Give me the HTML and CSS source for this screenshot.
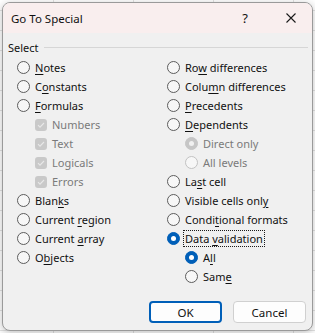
FILE: index.html
```html
<!DOCTYPE html>
<html lang="en">
<head>
    <meta charset="UTF-8">
    <title>Go To Special</title>
    <link rel="stylesheet" href="styles.css">
</head>
<body>
    <div class="dialog">
        <div class="titlebar">
            <span class="title">Go To Special</span>
            <span class="help">?</span>
            <svg class="close" width="10" height="10" viewBox="0 0 10 10">
                <path d="M0.5 0.5 L9.5 9.5 M9.5 0.5 L0.5 9.5" stroke="#1a1a1a" stroke-width="1.1"/>
            </svg>
        </div>

        <div class="content">
            <div class="group-head">
                <span>Select</span>
                <div class="rule"></div>
            </div>

            <div class="columns">
                <div class="col">
                    <label class="opt"><span class="radio"></span><span><u>N</u>otes</span></label>
                    <label class="opt"><span class="radio"></span><span>C<u>o</u>nstants</span></label>
                    <label class="opt"><span class="radio"></span><span><u>F</u>ormulas</span></label>
                    <label class="opt sub disabled"><span class="check"><svg width="12" height="12" viewBox="0 0 12 12"><path d="M3 6.2 L5 8.2 L9 4" fill="none" stroke="#e8e8e8" stroke-width="1.1"/></svg></span><span>Numbers</span></label>
                    <label class="opt sub disabled"><span class="check"><svg width="12" height="12" viewBox="0 0 12 12"><path d="M3 6.2 L5 8.2 L9 4" fill="none" stroke="#e8e8e8" stroke-width="1.1"/></svg></span><span>Text</span></label>
                    <label class="opt sub disabled"><span class="check"><svg width="12" height="12" viewBox="0 0 12 12"><path d="M3 6.2 L5 8.2 L9 4" fill="none" stroke="#e8e8e8" stroke-width="1.1"/></svg></span><span>Logicals</span></label>
                    <label class="opt sub disabled"><span class="check"><svg width="12" height="12" viewBox="0 0 12 12"><path d="M3 6.2 L5 8.2 L9 4" fill="none" stroke="#e8e8e8" stroke-width="1.1"/></svg></span><span>Errors</span></label>
                    <label class="opt"><span class="radio"></span><span>Blan<u>k</u>s</span></label>
                    <label class="opt"><span class="radio"></span><span>Current <u>r</u>egion</span></label>
                    <label class="opt"><span class="radio"></span><span>Current <u>a</u>rray</span></label>
                    <label class="opt"><span class="radio"></span><span>O<u>b</u>jects</span></label>
                </div>

                <div class="col">
                    <label class="opt"><span class="radio"></span><span>Ro<u>w</u> differences</span></label>
                    <label class="opt"><span class="radio"></span><span>Colu<u>m</u>n differences</span></label>
                    <label class="opt"><span class="radio"></span><span><u>P</u>recedents</span></label>
                    <label class="opt"><span class="radio"></span><span><u>D</u>ependents</span></label>
                    <label class="opt sub disabled"><span class="radio on"></span><span>Direct only</span></label>
                    <label class="opt sub disabled"><span class="radio"></span><span>All levels</span></label>
                    <label class="opt"><span class="radio"></span><span>La<u>s</u>t cell</span></label>
                    <label class="opt"><span class="radio"></span><span>Visible cells onl<u>y</u></span></label>
                    <label class="opt"><span class="radio"></span><span>Condi<u>t</u>ional formats</span></label>
                    <label class="opt"><span class="radio on"></span><span class="focus">Data <u>v</u>alidation</span></label>
                    <label class="opt sub"><span class="radio on"></span><span>A<u>l</u>l</span></label>
                    <label class="opt sub"><span class="radio"></span><span>Sam<u>e</u></span></label>
                </div>
            </div>

            <div class="buttons">
                <button class="btn default">OK</button>
                <button class="btn">Cancel</button>
            </div>
        </div>
    </div>
</body>
</html>
```

FILE: styles.css
```css
* {
    margin: 0;
    padding: 0;
    box-sizing: border-box;
}

body {
    font-family: 'Noto Sans', sans-serif;
    font-size: 11px;
    color: #111;
    width: 315px;
    height: 333px;
    padding: 2px 0 0 2px;
    overflow: hidden;
    background-color: #ffffff;
    background-image:
        linear-gradient(90deg, #e2e2e2 1px, transparent 1px),
        linear-gradient(#e2e2e2 1px, transparent 1px);
    background-size: 80px 100%, 100% 20px;
    background-position: 53px 0, 0 10px;
}

.dialog {
    width: 311px;
    height: 329px;
    border: 1px solid #9a9a9a;
    border-radius: 8px;
    overflow: hidden;
    background: #f0f0f0;
    box-shadow: 0 2px 8px rgba(0, 0, 0, 0.25);
}

.titlebar {
    height: 30px;
    background: #f9eeee;
    display: flex;
    align-items: center;
    padding-left: 8px;
    font-size: 11.5px;
}

.title {
    flex: 1;
}

.help {
    font-size: 13px;
    margin-right: 38px;
}

.close {
    margin-right: 16px;
}

.content {
    padding: 7px 0 0 5px;
}

.group-head {
    display: flex;
    align-items: center;
    height: 14px;
    gap: 5px;
    padding-right: 4px;
}

.rule {
    flex: 1;
    height: 1px;
    background: #d6d6d6;
}

.columns {
    display: grid;
    grid-template-columns: 150px 1fr;
    padding: 4px 0 0 9px;
}

.col {
    display: flex;
    flex-direction: column;
}

.opt {
    height: 19px;
    display: flex;
    align-items: center;
    white-space: nowrap;
}

.opt u {
    text-underline-offset: 2px;
}

.opt.sub {
    padding-left: 18px;
}

.opt.disabled {
    color: #7a7a7a;
}

.radio {
    width: 13px;
    height: 13px;
    flex: none;
    border-radius: 50%;
    border: 1px solid #5c5c5c;
    background: #f7f7f7;
    margin-right: 5px;
    position: relative;
}

.radio.on {
    background: #005fb8;
    border-color: #005fb8;
}

.radio.on::after {
    content: "";
    position: absolute;
    left: 3px;
    top: 3px;
    width: 5px;
    height: 5px;
    border-radius: 50%;
    background: #ffffff;
}

.disabled .radio {
    border-color: #c2c2c2;
}

.disabled .radio.on {
    background: #c6c6c6;
    border-color: #c6c6c6;
}

.disabled .radio.on::after {
    background: #f0f0f0;
}

.check {
    width: 12px;
    height: 12px;
    flex: none;
    border-radius: 3px;
    background: #c9c9c9;
    margin-right: 5px;
    display: flex;
}

.focus {
    outline: 1px dotted #1a1a1a;
    outline-offset: 0;
    padding: 0 1px;
    margin-left: -1px;
}

.buttons {
    display: flex;
    justify-content: flex-end;
    gap: 11px;
    padding: 15px 6px 0 0;
}

.btn {
    width: 73px;
    height: 22px;
    font-family: inherit;
    font-size: 11.5px;
    color: #111;
    background: #fdfdfd;
    border: 1px solid #d0d0d0;
    border-radius: 4px;
}

.btn.default {
    border: 2px solid #005fb8;
}
```
